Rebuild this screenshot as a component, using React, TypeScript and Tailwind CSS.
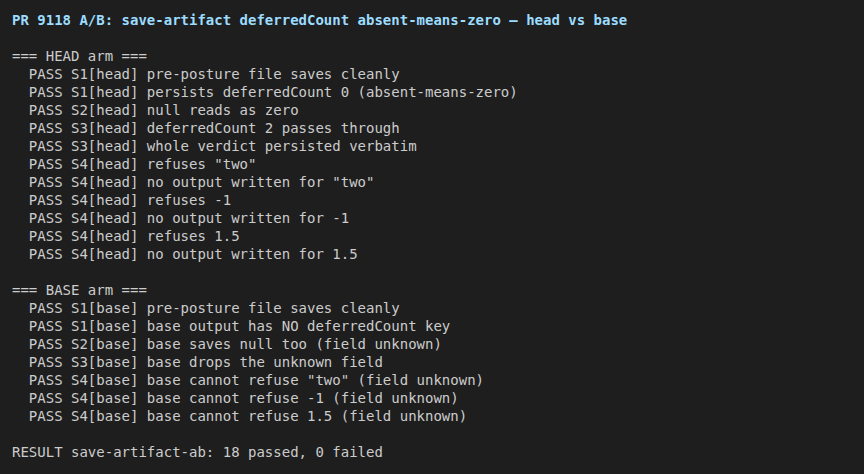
const lines: string[] = [
  "",
  "=== HEAD arm ===",
  "  PASS S1[head] pre-posture file saves cleanly",
  "  PASS S1[head] persists deferredCount 0 (absent-means-zero)",
  "  PASS S2[head] null reads as zero",
  "  PASS S3[head] deferredCount 2 passes through",
  "  PASS S3[head] whole verdict persisted verbatim",
  '  PASS S4[head] refuses "two"',
  '  PASS S4[head] no output written for "two"',
  "  PASS S4[head] refuses -1",
  "  PASS S4[head] no output written for -1",
  "  PASS S4[head] refuses 1.5",
  "  PASS S4[head] no output written for 1.5",
  "",
  "=== BASE arm ===",
  "  PASS S1[base] pre-posture file saves cleanly",
  "  PASS S1[base] base output has NO deferredCount key",
  "  PASS S2[base] base saves null too (field unknown)",
  "  PASS S3[base] base drops the unknown field",
  '  PASS S4[base] base cannot refuse "two" (field unknown)',
  "  PASS S4[base] base cannot refuse -1 (field unknown)",
  "  PASS S4[base] base cannot refuse 1.5 (field unknown)",
  "",
  "RESULT save-artifact-ab: 18 passed, 0 failed",
];

const App = () => {
  return (
    <div className="w-[864px] h-[474px] bg-[#1e1e1e] px-3 pt-[11px] font-['DejaVu_Sans_Mono',monospace] text-[14px] leading-[18px] whitespace-pre overflow-hidden">
      <div className="font-bold text-[#9cdcfe]">
        PR 9118 A/B: save-artifact deferredCount absent-means-zero — head vs base
      </div>
      {lines.map((line, i) => (
        <div key={i} className="text-[#cccccc] h-[18px]">
          {line}
        </div>
      ))}
    </div>
  );
};

export default App;
